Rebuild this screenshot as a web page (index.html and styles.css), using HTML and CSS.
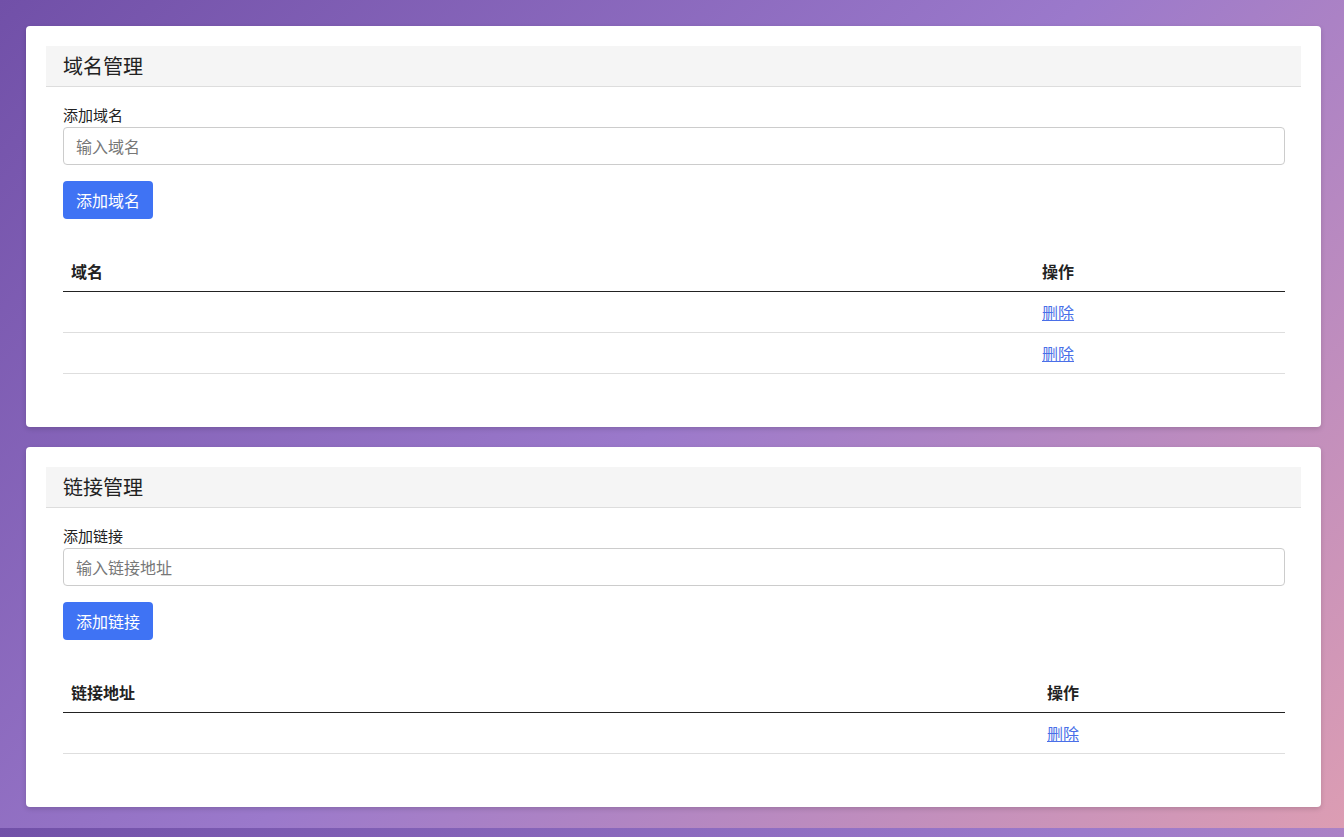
FILE: index.html
```html
<!DOCTYPE html>
<html lang="zh">
<head>
<meta charset="utf-8">
<title>管理</title>
<link rel="stylesheet" href="styles.css">
</head>
<body>
<div class="page">
  <section class="card">
    <h2 class="card-header">域名管理</h2>
    <div class="card-body">
      <div class="form-group">
        <label class="form-label">添加域名</label>
        <input class="form-input" type="text" placeholder="输入域名">
      </div>
      <button class="btn">添加域名</button>
      <table class="table">
        <thead>
          <tr><th class="col-main">域名</th><th class="col-op col-op-a">操作</th></tr>
        </thead>
        <tbody>
          <tr><td></td><td><a href="#" class="link">删除</a></td></tr>
          <tr><td></td><td><a href="#" class="link">删除</a></td></tr>
        </tbody>
      </table>
    </div>
  </section>

  <section class="card">
    <h2 class="card-header">链接管理</h2>
    <div class="card-body">
      <div class="form-group">
        <label class="form-label">添加链接</label>
        <input class="form-input" type="text" placeholder="输入链接地址">
      </div>
      <button class="btn">添加链接</button>
      <table class="table">
        <thead>
          <tr><th class="col-main">链接地址</th><th class="col-op col-op-b">操作</th></tr>
        </thead>
        <tbody>
          <tr><td></td><td><a href="#" class="link">删除</a></td></tr>
        </tbody>
      </table>
    </div>
  </section>
</div>
</body>
</html>
```

FILE: styles.css
```css
html {
  margin: 0;
  padding: 0;
  background: linear-gradient(135deg, #7150a8 0%, #9b79cb 50%, #dc9db3 100%);
}
body {
  margin: 0;
  padding: 0;
  font-family: "Microsoft YaHei", "Noto Sans CJK SC", "Noto Sans", sans-serif;
  color: #222;
  font-size: 16px;
}
.page {
  padding: 26px 23px 21px 26px;
  display: flex;
  flex-direction: column;
  gap: 20px;
}
.card {
  background: #fff;
  border-radius: 4px;
  box-shadow: 0 2px 5px rgba(0, 0, 0, 0.15);
  padding: 20px;
}
.card-header {
  margin: 0;
  height: 40px;
  line-height: 40px;
  padding: 0 17px;
  background: #f5f5f5;
  border-bottom: 1px solid #dddddd;
  font-size: 20px;
  font-weight: normal;
  color: #222;
}
.card-body {
  padding: 16px 16px 16px 17px;
}
.form-group {
  display: flex;
  flex-direction: column;
  margin-bottom: 16px;
}
.form-label {
  font-size: 15px;
  line-height: 24px;
  color: #222;
}
.form-input {
  box-sizing: border-box;
  height: 38px;
  padding: 0 12px;
  border: 1px solid #cccccc;
  border-radius: 4px;
  font-family: inherit;
  font-size: 16px;
  color: #222;
  outline: none;
}
.form-input::placeholder {
  color: #777;
}
.btn {
  display: block;
  height: 38px;
  padding: 0 13px;
  background: #3f73f4;
  color: #fff;
  border: none;
  border-radius: 4px;
  font-family: inherit;
  font-size: 16px;
  cursor: pointer;
}
.table {
  width: 100%;
  border-collapse: collapse;
  margin-top: 32px;
  margin-bottom: 17px;
  table-layout: fixed;
}
.table th {
  text-align: left;
  font-weight: bold;
  padding: 8px 8px;
  line-height: 24px;
  border-bottom: 1px solid #222;
  font-size: 16px;
}
.table td {
  padding: 8px 8px;
  line-height: 24px;
  height: 24px;
  border-bottom: 1px solid #dedede;
  font-size: 16px;
}
.col-op-a {
  width: 235px;
}
.col-op-b {
  width: 230px;
}
.link {
  color: #4a6fe8;
  text-decoration: underline;
}
```
